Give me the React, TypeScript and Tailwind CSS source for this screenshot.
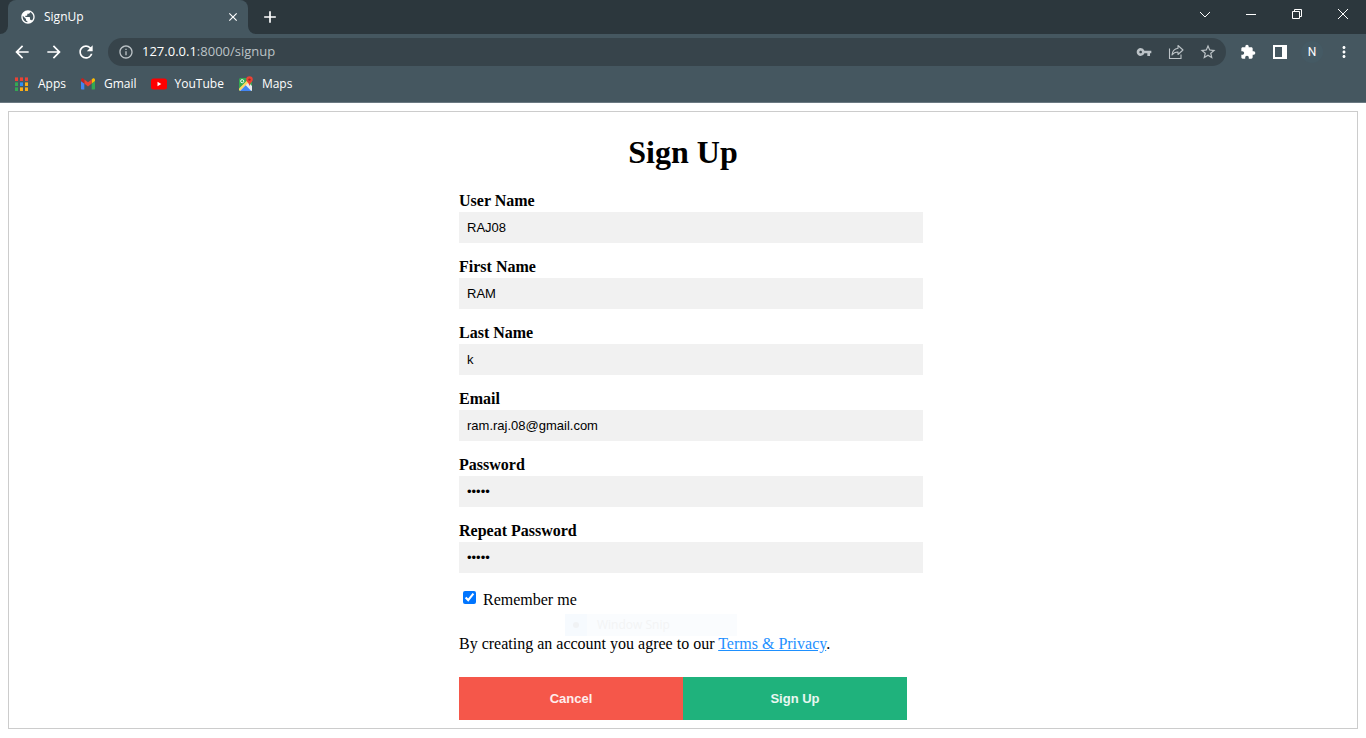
import { useState, type ReactNode } from "react";
import {
  MdArrowBack,
  MdArrowForward,
  MdClose,
  MdExtension,
  MdInfoOutline,
  MdMoreVert,
  MdPublic,
  MdAdd,
  MdRefresh,
  MdStarBorder,
  MdVpnKey,
} from "react-icons/md";

function AppsIcon() {
  const rows = [
    ["#ea4335", "#ea4335", "#ea4335"],
    ["#34a853", "#2f8df5", "#fbae17"],
    ["#34a853", "#fbae17", "#fbae17"],
  ];
  return (
    <svg width="16" height="16" viewBox="0 0 16 16" shapeRendering="crispEdges" aria-hidden="true">
      {rows.map((row, y) =>
        row.map((fill, x) => (
          <g key={`${x}-${y}`}>
            <rect x={1 + x * 5} y={1 + y * 5} width="3" height="1" fill={fill} opacity="0.6" />
            <rect x={1 + x * 5} y={2 + y * 5} width="3" height="3" fill={fill} />
          </g>
        )),
      )}
    </svg>
  );
}

function GmailIcon() {
  return (
    <svg width="16" height="16" viewBox="0 0 16 16" aria-hidden="true">
      <path d="M2 13.500h2.300V7.600L1 5.100v7.400c0 .6.4 1 1 1z" fill="#4285f4" />
      <path d="M11.700 13.500H14c.6 0 1-.4 1-1V5.100l-3.300 2.500z" fill="#34a853" />
      <path d="M11.700 3.500v4.100L15 5.100V3.900c0-1.400-1.500-2-2.500-1.200z" fill="#fbbc04" />
      <path d="M4.300 7.600V3.500L8 6.300l3.700-2.800v4.100L8 10.400z" fill="#ea4335" />
      <path d="M1 3.900v1.200l3.300 2.500V3.500l-.8-.8C2.500 1.900 1 2.500 1 3.900z" fill="#c5221f" />
    </svg>
  );
}

function YouTubeIcon() {
  return (
    <svg width="16" height="16" viewBox="0 0 16 16" aria-hidden="true">
      <rect x="0" y="2.500" width="16" height="11" rx="2.500" fill="#ff0000" />
      <path d="M6.500 5.800v4.400L10.300 8z" fill="#fff" />
    </svg>
  );
}

function MapsIcon() {
  return (
    <svg width="16" height="16" viewBox="0 0 16 16" aria-hidden="true">
      <rect x="1" y="2" width="13" height="13" rx="1.500" fill="#34a853" />
      <path d="M1.500 14.500 10 6l4 4v4c0 .6-.4 1-1 1H2.500z" fill="#e8eaed" />
      <path d="M1 14v-1.500L9.500 4l1.500 2-9 8.800z" fill="#fdd663" />
      <path d="M2 15l5.700-5.700L13.300 15z" fill="#4285f4" />
      <circle cx="4.200" cy="5.200" r="1.600" fill="none" stroke="#fff" strokeWidth="0.900" />
      <path d="M11.500.3a3.300 3.300 0 0 0-3.300 3.300c0 2.300 2.600 3 3.300 6.600.7-3.600 3.300-4.300 3.300-6.600A3.300 3.300 0 0 0 11.500.3z" fill="#ea4335" />
      <circle cx="11.500" cy="3.600" r="1.200" fill="#9f2b22" />
    </svg>
  );
}

function ShareIcon() {
  return (
    <svg width="16" height="16" viewBox="0 0 16 16" fill="none" stroke="currentColor" strokeWidth="1.100" aria-hidden="true">
      <path d="M1.500 4.500v10h11.500v-4" />
      <path d="M10 1.500 15 6l-5 4.500V8c-2.800 0-4.600.9-6 3 .3-3.600 2.300-6.300 6-6.800z" strokeLinejoin="round" />
    </svg>
  );
}

function IconButton({ label, children }: { label: string; children: ReactNode }) {
  return (
    <button type="button" aria-label={label} className="flex size-8 shrink-0 items-center justify-center">
      {children}
    </button>
  );
}

function WindowButton({ label, path }: { label: string; path: string }) {
  return (
    <button type="button" aria-label={label} className="flex h-7 w-[46px] items-center justify-center">
      <svg width="12" height="12" viewBox="0 0 12 12" fill="none" stroke="#fff" strokeWidth="1" aria-hidden="true">
        <path d={path} />
      </svg>
    </button>
  );
}

function TabStrip() {
  return (
    <div className="flex h-[34px] items-start justify-between bg-[#2c373d] pl-2">
      <div className="flex h-full items-center">
        <div className="relative flex h-full w-60 items-center gap-2 rounded-t-lg bg-[#455760] px-3">
          <svg className="absolute bottom-0 -left-2" width="8" height="8" viewBox="0 0 8 8" aria-hidden="true">
            <path d="M8 0v8H0a8 8 0 0 0 8-8z" fill="#455760" />
          </svg>
          <svg className="absolute -right-2 bottom-0" width="8" height="8" viewBox="0 0 8 8" aria-hidden="true">
            <path d="M0 0v8h8a8 8 0 0 1-8-8z" fill="#455760" />
          </svg>
          <MdPublic size={16} />
          <span className="flex-1">SignUp</span>
          <button type="button" aria-label="Close tab" className="-mr-1">
            <MdClose size={14} />
          </button>
        </div>
        <button type="button" aria-label="New tab" className="ml-3">
          <MdAdd size={20} />
        </button>
      </div>
      <div className="flex">
        <WindowButton label="Search tabs" path="M1 4l5 5 5-5" />
        <WindowButton label="Minimize" path="M1 6.500h10" />
        <WindowButton label="Restore" path="M1.500 3.500h7v7h-7zM3.500 3.500v-2h7v7h-2" />
        <WindowButton label="Close" path="M1 1l10 10M11 1L1 11" />
      </div>
    </div>
  );
}

function Toolbar() {
  return (
    <div className="flex h-9 items-center px-[6px]">
      <IconButton label="Back"><MdArrowBack size={20} /></IconButton>
      <IconButton label="Forward"><MdArrowForward size={20} /></IconButton>
      <IconButton label="Reload"><MdRefresh size={20} /></IconButton>
      <div className="mx-[6px] flex h-7 min-w-0 flex-1 items-center rounded-full bg-[#37444b] pr-[2px] pl-[10px] text-[#bcc3c7]">
        <MdInfoOutline size={16} className="shrink-0" />
        <div
          role="textbox"
          aria-label="Address"
          contentEditable
          suppressContentEditableWarning
          className="ml-2 min-w-0 flex-1 truncate text-[13px]"
        >
          <span className="text-white">127.0.0.1</span>
          <span>:8000/signup</span>
        </div>
        <IconButton label="Passwords"><MdVpnKey size={16} /></IconButton>
        <IconButton label="Share"><ShareIcon /></IconButton>
        <IconButton label="Bookmark"><MdStarBorder size={18} /></IconButton>
      </div>
      <IconButton label="Extensions"><MdExtension size={16} /></IconButton>
      <IconButton label="Side panel">
        <svg width="14" height="14" viewBox="0 0 14 14" aria-hidden="true">
          <path d="M0 0h14v14H0zM2 2v10h7V2z" fill="#fff" fillRule="evenodd" />
        </svg>
      </IconButton>
      <IconButton label="Profile">
        <span className="flex size-[22px] items-center justify-center rounded-full bg-[#455a64] font-['Roboto',sans-serif] text-xs">
          N
        </span>
      </IconButton>
      <IconButton label="Menu"><MdMoreVert size={18} /></IconButton>
    </div>
  );
}

const bookmarks = [
  { name: "Apps", icon: <AppsIcon /> },
  { name: "Gmail", icon: <GmailIcon /> },
  { name: "YouTube", icon: <YouTubeIcon /> },
  { name: "Maps", icon: <MapsIcon /> },
];

function Bookmarks() {
  return (
    <nav className="flex h-8 items-center gap-[14px] px-[14px] pb-1">
      {bookmarks.map(({ name, icon }) => (
        <a key={name} href="#" className="flex items-center gap-2">
          {icon}
          {name}
        </a>
      ))}
    </nav>
  );
}

const fields = [
  { id: "username", label: "User Name", type: "text", value: "RAJ08" },
  { id: "firstname", label: "First Name", type: "text", value: "RAM" },
  { id: "lastname", label: "Last Name", type: "text", value: "k" },
  { id: "email", label: "Email", type: "text", value: "ram.raj.08@gmail.com" },
  { id: "password", label: "Password", type: "password", value: "12345" },
  { id: "repeat", label: "Repeat Password", type: "password", value: "12345" },
];

function SignUpForm() {
  const [remember, setRemember] = useState(true);
  return (
    <form className="relative w-[448px] pb-2" onSubmit={(e) => e.preventDefault()}>
      <h1 className="py-5 text-center text-[32px] leading-10 font-bold">Sign Up</h1>
      {fields.map((f) => (
        <div key={f.id} className="mb-[15px]">
          <label htmlFor={f.id} className="block pb-[2px] leading-[18px] font-bold">
            {f.label}
          </label>
          <input
            id={f.id}
            type={f.type}
            defaultValue={f.value}
            className="block h-[31px] w-[464px] bg-[#f1f1f1] px-2 font-['Liberation_Sans',Arial,sans-serif] text-[13px] outline-none"
          />
        </div>
      ))}
      <label className="flex items-start gap-[7px] pt-[2px] pl-1 leading-5">
        <input
          type="checkbox"
          checked={remember}
          onChange={(e) => setRemember(e.target.checked)}
          className="mt-px size-[13px] accent-[#0075ff]"
        />
        Remember me
      </label>
      <p className="pt-6 pb-[23px] leading-5">
        By creating an account you agree to our{" "}
        <a href="#" className="text-[#1e90ff] underline">Terms &amp; Privacy</a>.
      </p>
      <div className="flex font-['Liberation_Sans',Arial,sans-serif] text-[13px] font-bold text-white/90">
        <button type="button" className="h-[43px] flex-1 bg-[#f5574a]">Cancel</button>
        <button type="submit" className="h-[43px] flex-1 bg-[#1fb27c]">Sign Up</button>
      </div>
      <div className="pointer-events-none absolute bottom-[92px] left-[106px] flex h-[22px] w-[172px] items-center bg-[#fafcfe] font-['Open_Sans',sans-serif] text-xs text-[#f3f4f5]">
        <span className="flex h-full w-[22px] items-center justify-center bg-[#f6fafe]">
          <span className="size-[6px] rounded-full bg-[#f0f2f4]" />
        </span>
        <span className="pl-[10px]">Window Snip</span>
      </div>
    </form>
  );
}

export default function App() {
  return (
    <div className="min-h-screen bg-white">
      <header className="border-b border-[#6b7982] bg-[#455760] font-['Open_Sans','Noto_Sans',sans-serif] text-xs text-white">
        <TabStrip />
        <Toolbar />
        <Bookmarks />
      </header>
      <main className="p-2 font-['Liberation_Serif','Times_New_Roman',serif] text-base text-black">
        <div className="flex justify-center border border-[#cccccc]">
          <SignUpForm />
        </div>
      </main>
    </div>
  );
}
